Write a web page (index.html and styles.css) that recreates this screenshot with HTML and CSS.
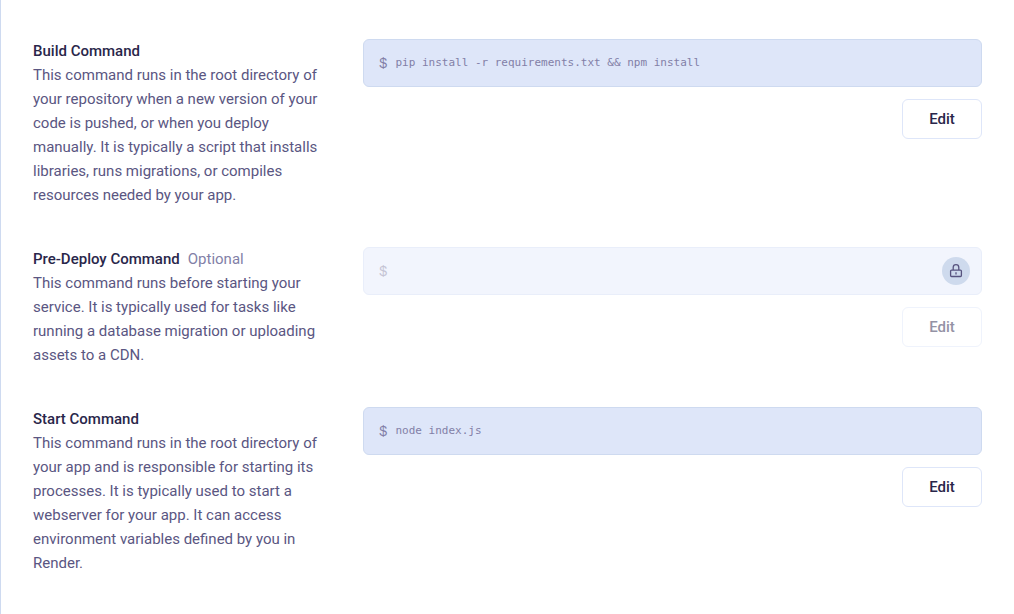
FILE: index.html
```html
<!DOCTYPE html>
<html lang="en">
<head>
<meta charset="utf-8">
<meta name="viewport" content="width=device-width, initial-scale=1">
<title>Build and deploy settings</title>
<link rel="stylesheet" href="styles.css">
</head>
<body>
<main class="settings">
  <section class="setting">
    <div class="info">
      <label class="title" for="build">Build Command</label>
      <p class="description">This command runs in the root directory of your repository when a new version of your code is pushed, or when you deploy manually. It is typically a script that installs libraries, runs migrations, or compiles resources needed by your app.</p>
    </div>
    <div class="control">
      <div class="field">
        <span class="prompt">$</span>
        <input class="command" id="build" type="text" value="pip install -r requirements.txt &amp;&amp; npm install" readonly>
      </div>
      <button class="edit" type="button">Edit</button>
    </div>
  </section>
  <section class="setting">
    <div class="info">
      <div class="heading">
        <label class="title" for="predeploy">Pre-Deploy Command</label>
        <span class="optional">Optional</span>
      </div>
      <p class="description">This command runs before starting your service. It is typically used for tasks like running a database migration or uploading assets to a CDN.</p>
    </div>
    <div class="control">
      <div class="field field-locked">
        <span class="prompt">$</span>
        <input class="command" id="predeploy" type="text" disabled>
        <span class="lock">
          <svg class="lock-icon" viewBox="0 0 16 16" fill="none" stroke="currentColor" stroke-width="1.3" stroke-linejoin="round" aria-hidden="true">
            <rect x="2.6" y="7.1" width="10.8" height="6.4" rx="1"/>
            <path d="M5.2 7V4.4a2.8 2.8 0 0 1 5.6 0V7"/>
            <path d="M8 9.2v2.4"/>
          </svg>
        </span>
      </div>
      <button class="edit" type="button" disabled>Edit</button>
    </div>
  </section>
  <section class="setting">
    <div class="info">
      <label class="title" for="start">Start Command</label>
      <p class="description">This command runs in the root directory of your app and is responsible for starting its processes. It is typically used to start a webserver for your app. It can access environment variables defined by you in Render.</p>
    </div>
    <div class="control">
      <div class="field">
        <span class="prompt">$</span>
        <input class="command" id="start" type="text" value="node index.js" readonly>
      </div>
      <button class="edit" type="button">Edit</button>
    </div>
  </section>
</main>
</body>
</html>
```
FILE: styles.css
```css
* {
  box-sizing: border-box;
}

body {
  margin: 0;
  background: #fff;
  color: #29264a;
  font: 15px/24px Roboto, "Liberation Sans", sans-serif;
}

.settings {
  display: flex;
  flex-direction: column;
  gap: 40px;
  min-height: 100vh;
  padding: 39px 32px;
  border-left: 1px solid #cedaf0;
}

.setting {
  display: grid;
  grid-template-columns: 290px 1fr;
  gap: 40px;
}

.heading {
  display: flex;
  gap: 8px;
}

.title {
  display: block;
  font-weight: 500;
}

.optional {
  color: #827fa7;
}

.description {
  margin: 0;
  color: #5a5682;
}

.control {
  display: flex;
  flex-direction: column;
  align-items: flex-end;
  gap: 12px;
}

.field {
  display: flex;
  align-items: center;
  gap: 8px;
  width: 100%;
  height: 48px;
  padding: 0 11px 0 15px;
  border: 1px solid #cedaf0;
  border-radius: 6px;
  background: #dee6f9;
  color: #827fa7;
}

.field-locked {
  border-color: #e9eefa;
  background: #f2f5fd;
}

.prompt {
  padding-top: 2px;
  font: 14px/24px "Liberation Mono", monospace;
}

.field-locked .prompt {
  color: #c5c4d4;
}

.command {
  flex: 1;
  min-width: 0;
  padding: 0;
  border: 0;
  background: transparent;
  color: inherit;
  font: 11px/24px "DejaVu Sans Mono", monospace;
}

.lock {
  display: grid;
  place-items: center;
  width: 28px;
  height: 28px;
  border-radius: 50%;
  background: #cedaed;
  color: #57537f;
}

.lock-icon {
  width: 16px;
  height: 16px;
}

.edit {
  width: 80px;
  height: 40px;
  padding: 0;
  border: 1px solid #dee6f9;
  border-radius: 6px;
  background: #fff;
  color: #29264a;
  font: 500 15px/24px Roboto, "Liberation Sans", sans-serif;
}

.edit:disabled {
  border-color: #eff3fc;
  color: #9492a5;
}
```
